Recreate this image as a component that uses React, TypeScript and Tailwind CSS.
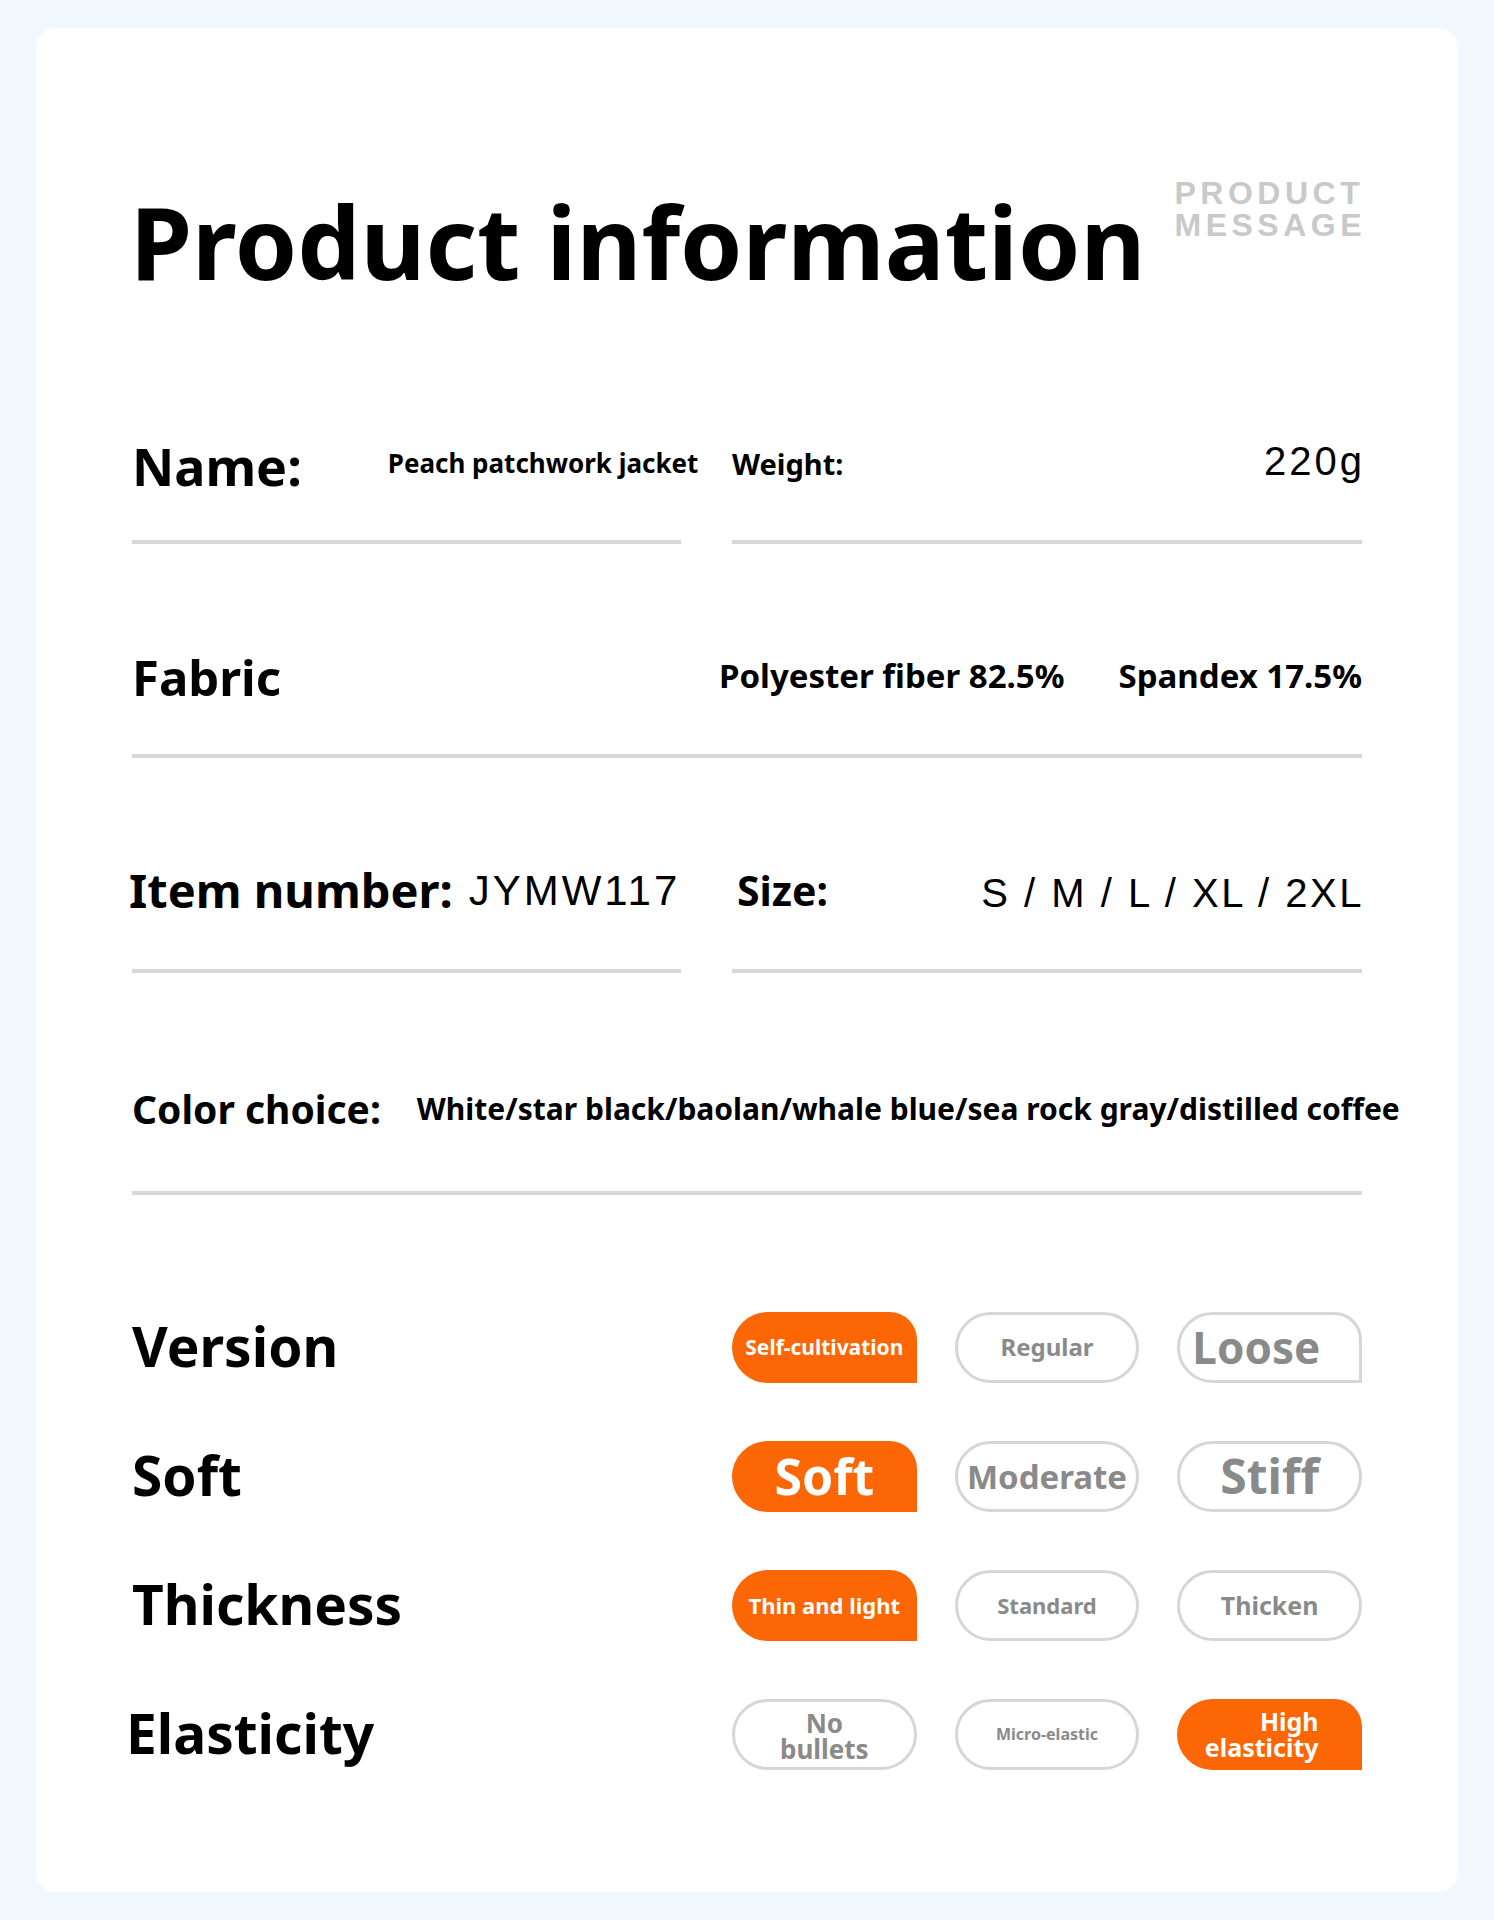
const sans = "font-['Noto_Sans',sans-serif] font-bold";
const arial = "font-['Liberation_Sans',Arial,sans-serif]";

type Pill = { text: React.ReactNode; active?: boolean; cut?: boolean; cls: string };

const rows: { label: string; labelCls?: string; pills: Pill[] }[] = [
	{
		label: 'Version',
		pills: [
			{ text: 'Self-cultivation', active: true, cls: 'text-[21px]' },
			{ text: 'Regular', cls: 'text-[24px]' },
			{ text: 'Loose', cut: true, cls: 'text-[44px] justify-start pl-[12px]' },
		],
	},
	{
		label: 'Soft',
		pills: [
			{ text: 'Soft', active: true, cls: 'text-[50px]' },
			{ text: 'Moderate', cls: 'text-[33px]' },
			{ text: 'Stiff', cls: 'text-[48px]' },
		],
	},
	{
		label: 'Thickness',
		pills: [
			{ text: 'Thin and light', active: true, cls: 'text-[22px]' },
			{ text: 'Standard', cls: 'text-[22px]' },
			{ text: 'Thicken', cls: 'text-[25px]' },
		],
	},
	{
		label: 'Elasticity',
		labelCls: '-ml-[6px]',
		pills: [
			{
				text: (
					<span className="block text-center leading-[26px]">
						No
						<br />
						bullets
					</span>
				),
				cls: 'text-[26px] pt-[4px]',
			},
			{ text: 'Micro-elastic', cls: 'text-[16px]' },
			{
				text: (
					<span className="inline-block text-right leading-[26px]">
						High
						<br />
						elasticity
					</span>
				),
				active: true,
				cls: 'text-[25px] pr-[16px]',
			},
		],
	},
];

function Line() {
	return <div className="h-[4px] w-full bg-[#d8d8d8]" />;
}

export default function App() {
	return (
		<div className="min-h-[1920px] w-[1494px] bg-[#f0f7fd] pt-[28px] pl-[36px]">
			<div className="w-[1422px] h-[1864px] bg-white rounded-[20px] pl-[96px] pr-[96px] pt-[150px] text-black">
				{/* heading */}
				<div className="flex justify-between items-start">
					<h1 className={`${sans} text-[100px] leading-none mt-[13px] -ml-[2px]`}>Product information</h1>
					<div className={`${arial} font-bold text-[32px] leading-[32px] text-[#c9c9c9] tracking-[4.5px] -mt-[1px] -mr-[4px]`}>
						<div>PRODUCT</div>
						<div>MESSAGE</div>
					</div>
				</div>

				{/* name / weight */}
				<div className="mt-[149px] flex gap-[51px]">
					<div className="w-[549px] shrink-0">
						<div className="flex items-end whitespace-nowrap">
							<span className={`${sans} text-[52px] leading-none`}>Name:</span>
							<span className={`${sans} text-[26px] leading-none mb-[16px] ml-[86px]`}>
								Peach patchwork jacket
							</span>
						</div>
						<div className="mt-[48px]">
							<Line />
						</div>
					</div>
					<div className="flex-1">
						<div className="flex items-end justify-between h-[52px]">
							<span className={`${sans} text-[29px] leading-none mb-[14px]`}>Weight:</span>
							<span className={`${arial} text-[40px] leading-none mb-[11px] tracking-[3px] -mr-[3px]`}>
								220g
							</span>
						</div>
						<div className="mt-[48px]">
							<Line />
						</div>
					</div>
				</div>

				{/* fabric */}
				<div className="mt-[109px]">
					<div className="flex items-end whitespace-nowrap">
						<span className={`${sans} text-[49px] leading-none`}>Fabric</span>
						<span className="flex-1" />
						<span className={`${sans} text-[33px] leading-none mb-[10px]`}>Polyester fiber 82.5%</span>
						<span className={`${sans} text-[33px] leading-none mb-[10px] ml-[54px]`}>Spandex 17.5%</span>
					</div>
					<div className="mt-[52px]">
						<Line />
					</div>
				</div>

				{/* item number / size */}
				<div className="mt-[108px] flex gap-[51px]">
					<div className="w-[549px] shrink-0">
						<div className="flex items-end h-[50px] whitespace-nowrap -ml-[3px]">
							<span className={`${sans} text-[47px] leading-none mb-[2px]`}>Item number:</span>
							<span className={`${arial} text-[42px] leading-none mb-[4px] ml-[16px] tracking-[3px]`}>
								JYMW117
							</span>
						</div>
						<div className="mt-[53px]">
							<Line />
						</div>
					</div>
					<div className="flex-1">
						<div className="flex items-end justify-between h-[50px] whitespace-nowrap">
							<span className={`${sans} text-[41px] leading-none mb-[5px] ml-[5px]`}>Size:</span>
							<span className={`${arial} text-[40px] leading-none mb-[3px] tracking-[2.5px] -mr-[2px]`}>
								S / M / L / XL / 2XL
							</span>
						</div>
						<div className="mt-[53px]">
							<Line />
						</div>
					</div>
				</div>

				{/* color choice */}
				<div className="mt-[116px]">
					<div className="flex items-end whitespace-nowrap">
						<span className={`${sans} text-[39px] leading-none`}>Color choice:</span>
						<span className={`${sans} text-[30px] leading-none mb-[4px] ml-[36px]`}>
							White/star black/baolan/whale blue/sea rock gray/distilled coffee
						</span>
					</div>
					<div className="mt-[63px]">
						<Line />
					</div>
				</div>

				{/* attributes */}
				<div className="mt-[116px] flex flex-col gap-[57px]">
					{rows.map((row) => (
						<div key={row.label} className="flex items-center h-[72px]">
							<div className="flex-1">
								<span className={`${sans} text-[55px] leading-none block -mt-[4px] ${row.labelCls ?? ''}`}>
									{row.label}
								</span>
							</div>
							<div className="w-[630px] grid grid-cols-3 gap-[38px]">
								{row.pills.map((p, i) => (
									<div
										key={i}
										className={`${sans} ${p.cls} h-[71px] flex items-center justify-center leading-none whitespace-nowrap ${
											p.active
												? 'bg-[#fd6604] text-white rounded-l-[36px] rounded-tr-[28px]'
												: p.cut
													? 'border-[3px] border-[#d6d6d6] text-[#8a8a8a] rounded-l-[36px] rounded-tr-[28px]'
													: 'border-[3px] border-[#d6d6d6] text-[#8a8a8a] rounded-full'
										}`}
									>
										{p.text}
									</div>
								))}
							</div>
						</div>
					))}
				</div>
			</div>
		</div>
	);
}
